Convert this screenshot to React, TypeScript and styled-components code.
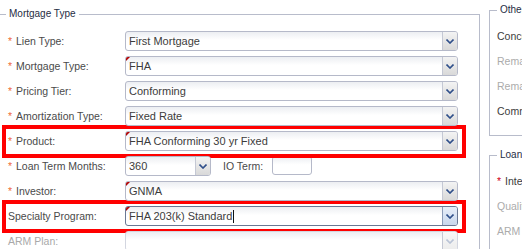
import styled, { createGlobalStyle } from "styled-components";

const GlobalStyle = createGlobalStyle`
  html, body {
    margin: 0;
    padding: 0;
    background: #ffffff;
    overflow: hidden;
  }
  body {
    font-family: "Liberation Sans", Arial, sans-serif;
  }
`;

const Page = styled.div`
  display: flex;
  align-items: flex-start;
  gap: 9px;
  margin-left: -2px;
  width: 800px;
`;

const Fieldset = styled.fieldset<{ $width: number }>`
  box-sizing: border-box;
  width: ${(p) => p.$width}px;
  margin: 0;
  border: 1px solid #b8bccb;
  padding: 7px 4px 11px 7px;
`;

const Legend = styled.legend`
  padding: 0 3px;
  font-size: 10px;
  line-height: 14px;
  color: #1f2d44;
`;

const LeftPanel = styled(Fieldset)`
  margin-top: 7px;
  padding-top: 8px;
  min-height: 260px;
`;

const RightColumn = styled.div`
  display: flex;
  flex-direction: column;
  gap: 12px;
  margin-top: 3px;
`;

const Row = styled.div<{ $highlight?: boolean }>`
  display: flex;
  align-items: flex-start;
  box-sizing: border-box;
  width: 456px;
  height: 25px;
  padding-top: 2px;
  outline: ${(p) => (p.$highlight ? "4px solid #ff0000" : "none")};
`;

const Label = styled.div<{ $disabled?: boolean }>`
  width: 119px;
  flex: none;
  padding-left: 2px;
  box-sizing: border-box;
  font-size: 10.5px;
  line-height: 20px;
  color: ${(p) => (p.$disabled ? "#a9a9a9" : "#4a4a4a")};
  white-space: nowrap;
`;

const Star = styled.span<{ $dark?: boolean }>`
  display: inline-block;
  width: 8px;
  color: ${(p) => (p.$dark ? "#d0021b" : "#ee6a3a")};
`;

const SelectBox = styled.div<{ $width?: number; $focus?: boolean; $disabled?: boolean; $dirty?: boolean }>`
  position: relative;
  box-sizing: border-box;
  display: flex;
  width: ${(p) => (p.$width ? `${p.$width}px` : "333px")};
  height: 20px;
  border: 1px solid
    ${(p) => (p.$focus ? "#6a7894" : p.$disabled ? "#d3d6e0" : "#b5b9c9")};
  border-radius: 3px;
  background: linear-gradient(#eceef2 0%, #ffffff 45%);
  overflow: hidden;

  &::before {
    content: "";
    display: ${(p) => (p.$dirty ? "block" : "none")};
    position: absolute;
    left: -1px;
    top: -1px;
    border-top: 6px solid #b20000;
    border-right: 6px solid transparent;
  }
`;

const Value = styled.div`
  flex: 1;
  display: flex;
  align-items: center;
  padding-left: 3px;
  font-size: 11px;
  line-height: 18px;
  color: #3c3c3c;
  white-space: nowrap;
  overflow: hidden;
`;

const Caret = styled.span`
  display: inline-block;
  width: 1px;
  height: 13px;
  margin-left: 1px;
  background: #111111;
`;

const Trigger = styled.div<{ $focus?: boolean; $disabled?: boolean }>`
  width: 14px;
  flex: none;
  display: flex;
  align-items: center;
  justify-content: center;
  border-left: 1px solid ${(p) => (p.$focus ? "#8b9bb8" : "#c4c8d4")};
  background: ${(p) =>
    p.$focus
      ? "linear-gradient(#e6eef9, #c9d7ec)"
      : p.$disabled
      ? "linear-gradient(#f8f8f8, #ececec)"
      : "linear-gradient(#f3f3f3, #d9d9d9)"};
  color: ${(p) => (p.$disabled ? "#b9c3d6" : "#2f4f8a")};
`;

const TextInput = styled.div`
  box-sizing: border-box;
  width: 40px;
  height: 19px;
  border: 1px solid #b5b9c9;
  border-radius: 3px;
  background: linear-gradient(#eceef2 0%, #ffffff 45%);
`;

const InlineLabel = styled.div`
  margin: 0 9px 0 12px;
  font-size: 10.5px;
  line-height: 20px;
  color: #4a4a4a;
`;

const SideRow = styled.div<{ $disabled?: boolean }>`
  height: 25px;
  font-size: 10.5px;
  line-height: 25px;
  color: ${(p) => (p.$disabled ? "#ababab" : "#3c3c3c")};
  white-space: nowrap;
`;

const Chevron = () => (
  <svg width="8" height="5" viewBox="0 0 8 5">
    <path d="M0.5 0.5 L4 4 L7.5 0.5" fill="none" stroke="currentColor" strokeWidth="1.6" />
  </svg>
);

type SelectProps = {
  value?: string;
  width?: number;
  focus?: boolean;
  disabled?: boolean;
  dirty?: boolean;
};

const Select = ({ value, width, focus, disabled, dirty }: SelectProps) => (
  <SelectBox $width={width} $focus={focus} $disabled={disabled} $dirty={dirty}>
    <Value>
      {value}
      {focus && <Caret />}
    </Value>
    <Trigger $focus={focus} $disabled={disabled}>
      <Chevron />
    </Trigger>
  </SelectBox>
);

export default function App() {
  return (
    <>
      <GlobalStyle />
      <Page>
        <LeftPanel $width={482}>
          <Legend>Mortgage Type</Legend>
          <Row>
            <Label><Star>*</Star>Lien Type:</Label>
            <Select value="First Mortgage" />
          </Row>
          <Row>
            <Label><Star>*</Star>Mortgage Type:</Label>
            <Select value="FHA" dirty />
          </Row>
          <Row>
            <Label><Star>*</Star>Pricing Tier:</Label>
            <Select value="Conforming" />
          </Row>
          <Row>
            <Label><Star>*</Star>Amortization Type:</Label>
            <Select value="Fixed Rate" />
          </Row>
          <Row $highlight>
            <Label><Star>*</Star>Product:</Label>
            <Select value="FHA Conforming 30 yr Fixed" dirty />
          </Row>
          <Row>
            <Label><Star>*</Star>Loan Term Months:</Label>
            <Select value="360" width={86} />
            <InlineLabel>IO Term:</InlineLabel>
            <TextInput />
          </Row>
          <Row>
            <Label><Star>*</Star>Investor:</Label>
            <Select value="GNMA" dirty />
          </Row>
          <Row $highlight>
            <Label>Specialty Program:</Label>
            <Select value="FHA 203(k) Standard" dirty focus />
          </Row>
          <Row>
            <Label $disabled>ARM Plan:</Label>
            <Select disabled />
          </Row>
        </LeftPanel>
        <RightColumn>
          <Fieldset $width={240}>
            <Legend>Other Details</Legend>
            <SideRow>Concurrent 2nd:</SideRow>
            <SideRow $disabled>Remaining Term:</SideRow>
            <SideRow $disabled>Remaining Balance:</SideRow>
            <SideRow>Community Lending:</SideRow>
          </Fieldset>
          <Fieldset $width={240}>
            <Legend>Loan Amounts</Legend>
            <SideRow><Star $dark>*</Star>Interest Rate:</SideRow>
            <SideRow $disabled>Qualifying Rate:</SideRow>
            <SideRow $disabled>ARM Margin:</SideRow>
          </Fieldset>
        </RightColumn>
      </Page>
    </>
  );
}
